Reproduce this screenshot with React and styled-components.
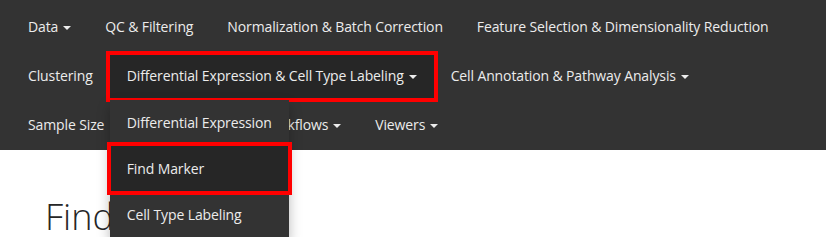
import React from "react";
import styled, { createGlobalStyle, css } from "styled-components";

const GlobalStyle = createGlobalStyle`
  html, body { margin: 0; padding: 0; background: #fff; }
  body {
    font-family: "Open Sans", "Liberation Sans", sans-serif;
    font-size: 14px;
    overflow: hidden;
  }
`;

const Navbar = styled.nav`
  background: #333333;
  padding: 2px 11px 1px;
  letter-spacing: -0.12px;
`;

const NavRow = styled.ul`
  display: flex;
  list-style: none;
  margin: 0;
  padding: 0;
  height: 49px;
`;

const NavItem = styled.li`
  position: relative;
`;

const redBox = css`
  &::after {
    content: "";
    position: absolute;
    border: 4px solid #ff0000;
    pointer-events: none;
  }
`;

const NavLink = styled.a`
  display: block;
  padding: 15px 17px 14px;
  line-height: 20px;
  color: #ececec;
  text-decoration: none;
  white-space: nowrap;
  background: ${(p) => (p.$active ? "#262626" : "transparent")};
  ${(p) =>
    p.$highlight &&
    css`
      ${redBox}
      &::after {
        left: -4px;
        right: -4px;
        top: 0;
        bottom: -2px;
      }
    `}
`;

const Caret = styled.span`
  display: inline-block;
  width: 0;
  height: 0;
  margin-left: 5px;
  vertical-align: middle;
  border-top: 4px solid currentColor;
  border-left: 4px solid transparent;
  border-right: 4px solid transparent;
`;

const DropdownMenu = styled.ul`
  position: absolute;
  top: 100%;
  left: 0;
  z-index: 10;
  list-style: none;
  margin: 0;
  padding: 0;
  background: #333333;
  box-shadow: 0 6px 12px rgba(0, 0, 0, 0.28);
`;

const MenuItem = styled.li`
  position: relative;
`;

const MenuLink = styled.a`
  display: block;
  padding: 0 17px;
  height: 46px;
  line-height: 46px;
  color: #ececec;
  text-decoration: none;
  white-space: nowrap;
  background: ${(p) => (p.$hover ? "#262626" : "transparent")};
  ${(p) =>
    p.$highlight &&
    css`
      ${redBox}
      &::after {
        left: -3px;
        right: -3px;
        top: -4px;
        bottom: -3px;
      }
    `}
`;

const Main = styled.main`
  padding: 47px 45px 0;
`;

const Title = styled.h1`
  margin: 0;
  font-size: 36px;
  font-weight: 300;
  line-height: 1.1;
  color: #262626;
  white-space: nowrap;
`;

const rows = [
  [
    { label: "Data", caret: true },
    { label: "QC & Filtering" },
    { label: "Normalization & Batch Correction" },
    { label: "Feature Selection & Dimensionality Reduction" },
  ],
  [
    { label: "Clustering" },
    {
      label: "Differential Expression & Cell Type Labeling",
      caret: true,
      open: true,
      menu: [
        { label: "Differential Expression" },
        { label: "Find Marker", hover: true, highlight: true },
        { label: "Cell Type Labeling" },
      ],
    },
    { label: "Cell Annotation & Pathway Analysis", caret: true },
  ],
  [
    { label: "Sample Size" },
    { label: "Trajectory & Other Workflows", caret: true },
    { label: "Viewers", caret: true },
  ],
];

export default function App() {
  return (
    <>
      <GlobalStyle />
      <Navbar>
        {rows.map((row, i) => (
          <NavRow key={i}>
            {row.map((item) => (
              <NavItem key={item.label}>
                <NavLink href="#" $active={item.open} $highlight={item.open}>
                  {item.label}
                  {item.caret && <Caret />}
                </NavLink>
                {item.menu && (
                  <DropdownMenu>
                    {item.menu.map((m) => (
                      <MenuItem key={m.label}>
                        <MenuLink href="#" $hover={m.hover} $highlight={m.highlight}>
                          {m.label}
                        </MenuLink>
                      </MenuItem>
                    ))}
                  </DropdownMenu>
                )}
              </NavItem>
            ))}
          </NavRow>
        ))}
      </Navbar>
      <Main>
        <Title>Find Marker</Title>
      </Main>
    </>
  );
}
